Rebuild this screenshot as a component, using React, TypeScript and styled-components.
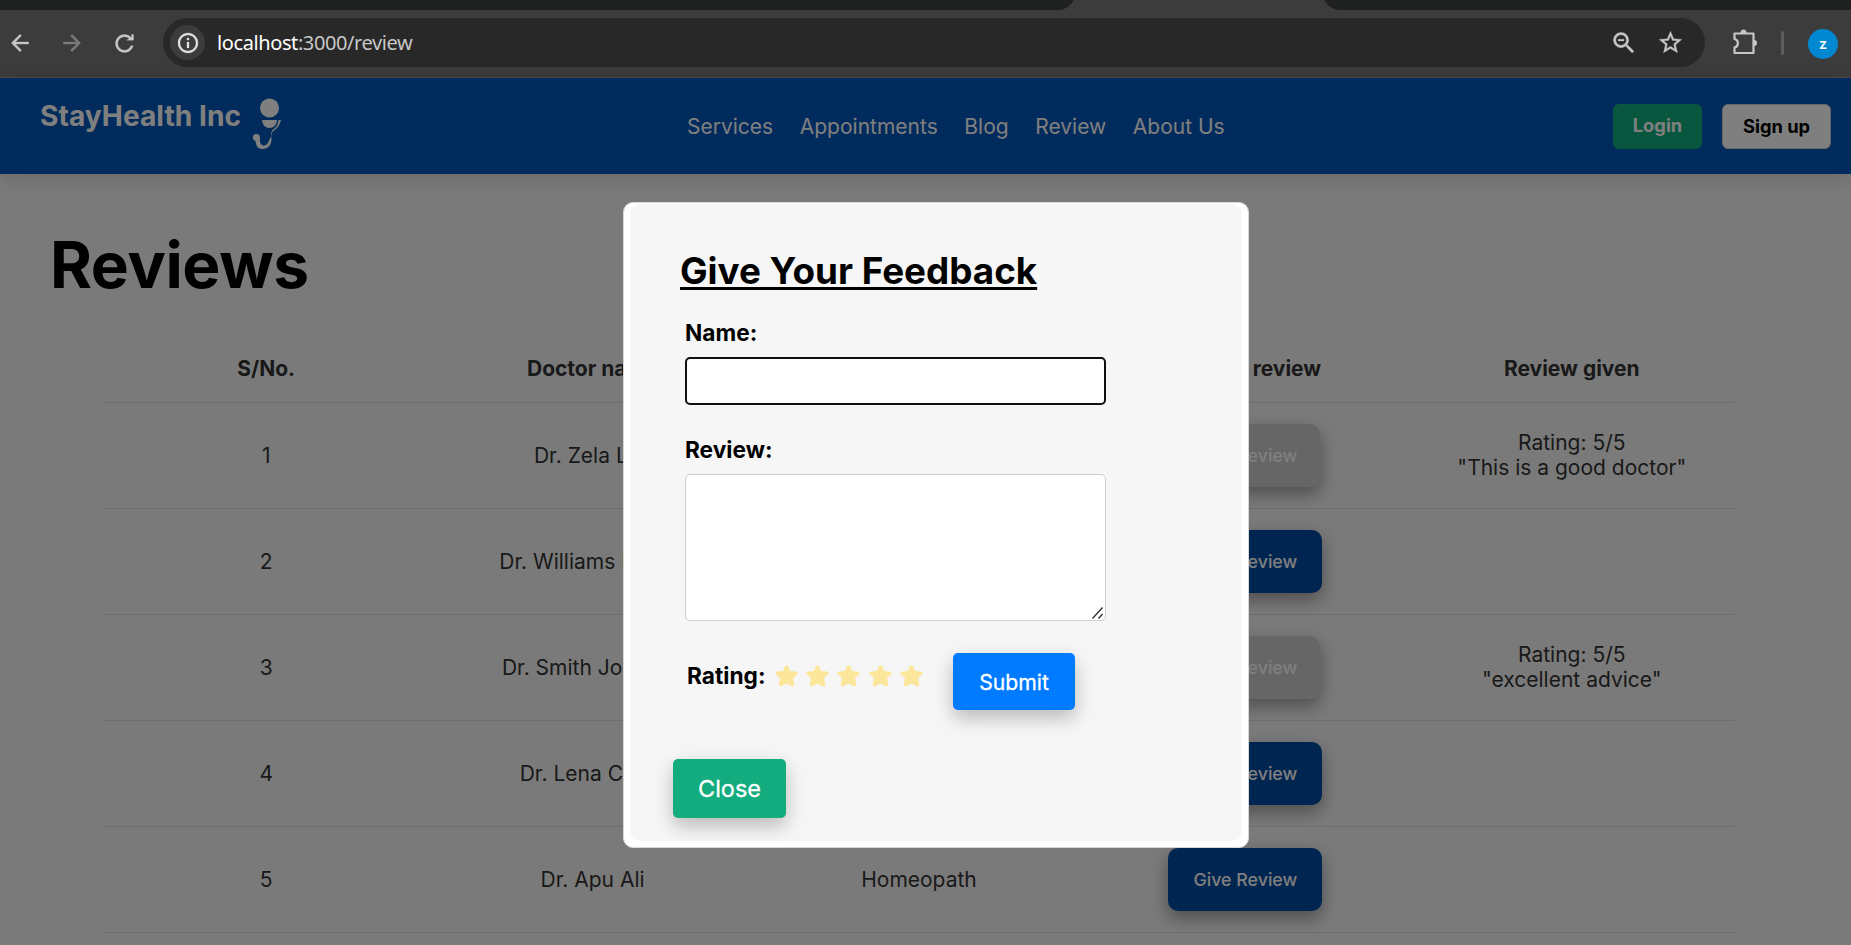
import React from "react";
import styled, { createGlobalStyle } from "styled-components";

const Global = createGlobalStyle`
  * { box-sizing: border-box; }
  body { margin: 0; font-family: Inter, "Liberation Sans", sans-serif; background: #f5f5f5; overflow: hidden; }
  button, input, textarea { font-family: inherit; }
`;

const Window = styled.div`
  width: 1851px;
  height: 945px;
  overflow: hidden;
  display: flex;
  flex-direction: column;
`;

const TabStrip = styled.div`
  height: 10px;
  flex: none;
  background: #3c3c3c;
  display: flex;
  justify-content: space-between;
`;

const TabGap = styled.div<{ $width: number; $side: "left" | "right" }>`
  width: ${(p) => p.$width}px;
  height: 20px;
  margin-top: -10px;
  background: #1f2120;
  border-radius: ${(p) => (p.$side === "left" ? "0 0 17px 0" : "0 0 0 17px")};
`;

const Toolbar = styled.div`
  height: 68px;
  flex: none;
  background: #3c3c3c;
  border-bottom: 1px solid #4c4c4c;
  display: flex;
  align-items: center;
  padding: 0 13px 2px 7px;
  color: #c7c7c7;
`;

const NavIcons = styled.div`
  display: flex;
  gap: 26px;
  width: 156px;
  padding-top: 1px;
  svg { display: block; }
`;

const Address = styled.div`
  width: 1542px;
  height: 49px;
  border-radius: 25px;
  background: #282828;
  display: flex;
  align-items: center;
  padding: 0 21px 0 7px;
`;

const InfoBadge = styled.div`
  width: 35px;
  height: 35px;
  border-radius: 50%;
  background: #3c3c3c;
  display: grid;
  place-items: center;
  color: #e3e3e3;
`;

const Url = styled.div`
  flex: 1;
  margin-left: 12px;
  font: 20px "Noto Sans", sans-serif;
  letter-spacing: -0.4px;
  color: #c7c7c7;
  b { font-weight: 400; color: #fff; }
`;

const AddressIcons = styled.div`
  display: flex;
  gap: 19px;
`;

const Extensions = styled.div`
  margin-left: 24px;
  margin-top: -3px;
  display: flex;
`;

const Divider = styled.div`
  width: 3px;
  height: 24px;
  margin-left: 22px;
  border-radius: 2px;
  background: #5e5e5e;
`;

const Avatar = styled.div`
  width: 30px;
  height: 30px;
  margin: 2px 0 0 auto;
  border-radius: 50%;
  background: #0288d1;
  color: #fff;
  font: 500 15px Roboto, sans-serif;
  display: grid;
  place-items: center;
`;

const Page = styled.div`
  position: relative;
  flex: 1;
  min-height: 0;
  background: #f5f5f5;
`;

const Header = styled.header`
  height: 96px;
  background: #0056b8;
  box-shadow: 0 4px 20px rgba(0, 0, 0, 0.15);
  display: flex;
  align-items: center;
  justify-content: space-between;
  padding: 0 20px 0 40px;
`;

const Brand = styled.div`
  width: 507px;
  height: 96px;
  display: flex;
  color: #fff;
  font-size: 28.2px;
  line-height: 36px;
  font-weight: 700;
  padding-top: 20px;
  span { width: 201px; white-space: nowrap; }
  svg { margin-left: 11px; }
`;

const Links = styled.nav`
  display: flex;
  gap: 26.6px;
  margin-right: auto;
  margin-left: 140px;
  a { color: #fff; font-size: 21px; line-height: 26px; padding-top: 2px; }
`;

const Auth = styled.div`
  display: flex;
  gap: 20px;
`;

const AuthButton = styled.button<{ $primary?: boolean }>`
  width: ${(p) => (p.$primary ? 89 : 109)}px;
  height: 45px;
  padding: ${(p) => (p.$primary ? "0 0 2px" : "0")};
  border: ${(p) => (p.$primary ? "0" : "1px solid #ccc")};
  border-radius: 6px;
  background: ${(p) => (p.$primary ? "#12ac7e" : "#fff")};
  color: ${(p) => (p.$primary ? "#fff" : "#000")};
  font-size: 18.3px;
  font-weight: 700;
`;

const Title = styled.h1`
  margin: 47px 0 0 50px;
  font-size: 64px;
  line-height: 88px;
  font-weight: 700;
  letter-spacing: -0.4px;
  color: #000;
`;

const Table = styled.table`
  margin: 25px 0 0 103px;
  width: 1632px;
  border-collapse: collapse;
  table-layout: fixed;
  color: #333;
  font-size: 21px;
  line-height: 25px;
  text-align: center;
`;

const HeadCell = styled.th`
  height: 68px;
  padding: 2px 0 0;
  font-weight: 700;
  border-bottom: 1px solid #ddd;
`;

const Cell = styled.td`
  height: 106.2px;
  padding: 0;
  font-weight: 400;
  border-bottom: 1px solid #ddd;
`;

const ReviewButton = styled.button`
  height: 63px;
  padding: 0 25px;
  border: 0;
  border-radius: 10px;
  background: #004aa0;
  color: #fff;
  font-size: 17.8px;
  font-weight: 500;
  vertical-align: middle;
  box-shadow: 0 8px 16px rgba(0, 0, 0, 0.2), 0 6px 20px rgba(0, 0, 0, 0.19);
  &:disabled { background: #ccc; color: #fff; padding: 0 23px; }
`;

const Overlay = styled.div`
  position: absolute;
  inset: 0;
  background: rgba(0, 0, 0, 0.5);
`;

const Modal = styled.div`
  position: absolute;
  left: 623px;
  top: 124px;
  width: 626px;
  height: 646px;
  padding: 1px 6px 6px;
  border: 1px solid #d7d7d7;
  border-radius: 10px;
  background: #fff;
`;

const Panel = styled.div`
  height: 100%;
  border-radius: 10px;
  background: #f6f6f6;
  padding: 44px 0 0 50px;
`;

const PanelTitle = styled.h2`
  margin: 0;
  font-size: 36.8px;
  line-height: 46px;
  font-weight: 700;
  text-decoration: underline;
  text-decoration-thickness: 3px;
  text-underline-offset: 3px;
  text-decoration-skip-ink: none;
`;

const Form = styled.form`
  padding-left: 5px;
`;

const Label = styled.label<{ $top: number }>`
  display: block;
  margin-top: ${(p) => p.$top}px;
  font-size: 22.7px;
  line-height: 28px;
  font-weight: 700;
`;

const NameInput = styled.input`
  display: block;
  width: 421px;
  height: 48px;
  margin-top: 10px;
  border: 2px solid #101010;
  border-radius: 5px;
  background: #fff;
  outline: none;
`;

const ReviewBox = styled.div`
  position: relative;
  width: 421px;
  height: 147px;
  margin-top: 10px;
  svg { position: absolute; right: 2px; bottom: 2px; }
`;

const ReviewInput = styled.textarea`
  display: block;
  width: 100%;
  height: 100%;
  resize: none;
  border: 1px solid #ccc;
  border-radius: 5px;
  background: #fff;
`;

const RatingRow = styled.div`
  display: flex;
  align-items: flex-start;
  margin-top: 32px;
  padding-left: 2px;
`;

const RatingLabel = styled.span`
  width: 86px;
  margin-top: 9px;
  font-size: 22.7px;
  line-height: 28px;
  font-weight: 700;
`;

const Stars = styled.div`
  display: flex;
  gap: 4.2px;
  margin-top: 10px;
  width: 180px;
`;

const ActionButton = styled.button<{ $close?: boolean }>`
  width: ${(p) => (p.$close ? 113 : 122)}px;
  height: ${(p) => (p.$close ? 59 : 57)}px;
  margin: ${(p) => (p.$close ? "49px 0 0 -7px" : "0")};
  display: block;
  padding: 0;
  border: 0;
  border-radius: 5px;
  background: ${(p) => (p.$close ? "#12ac7e" : "#007bff")};
  color: #fff;
  font-size: ${(p) => (p.$close ? 23.4 : 21.2)}px;
  font-weight: 400;
  -webkit-text-stroke: 0.3px #fff;
  box-shadow: 0 8px 16px rgba(0, 0, 0, 0.13), 0 8px 24px rgba(0, 0, 0, 0.13);
`;

const doctors = [
  { name: "Dr. Zela Lim", field: "Dentist", review: "This is a good doctor" },
  { name: "Dr. Williams Bryant", field: "Dermatology" },
  { name: "Dr. Smith Johnson", field: "Cardiology", review: "excellent advice" },
  { name: "Dr. Lena Costa", field: "Neurology" },
  { name: "Dr. Apu Ali", field: "Homeopath" },
];

const Glyph = ({ d, size = 26, color = "currentColor" }: { d: string; size?: number; color?: string }) => (
  <svg width={size} height={size} viewBox="0 0 24 24" fill={color} stroke={color} strokeWidth={0.3}>
    <path d={d} />
  </svg>
);

const BACK = "M20 11H7.83l5.59-5.59L12 4l-8 8 8 8 1.41-1.41L7.83 13H20v-2z";
const FORWARD = "M4 11h12.17l-5.59-5.59L12 4l8 8-8 8-1.41-1.41L16.17 13H4v-2z";
const RELOAD = "M17.65 6.35C16.2 4.9 14.21 4 12 4c-4.42 0-7.99 3.58-7.99 8s3.57 8 7.99 8c3.73 0 6.84-2.55 7.73-6h-2.08c-.82 2.33-3.04 4-5.65 4-3.31 0-6-2.69-6-6s2.69-6 6-6c1.66 0 3.14.69 4.22 1.78L14 9h6V4h-1.8v2.9z";
const INFO = "M11 7h2v2h-2zm0 4h2v6h-2zm1-9C6.48 2 2 6.48 2 12s4.48 10 10 10 10-4.48 10-10S17.52 2 12 2zm0 18c-4.41 0-8-3.59-8-8s3.59-8 8-8 8 3.59 8 8-3.59 8-8 8z";
const ZOOM_OUT = "M15.5 14h-.79l-.28-.27C15.41 12.59 16 11.11 16 9.5 16 5.91 13.09 3 9.5 3S3 5.91 3 9.5 5.91 16 9.5 16c1.61 0 3.09-.59 4.23-1.57l.27.28v.79l5 4.99L20.49 19l-4.99-5zm-6 0C7.01 14 5 11.99 5 9.5S7.01 5 9.5 5 14 7.01 14 9.5 11.99 14 9.5 14zM7 8.7h5v1.5H7z";
const BOOKMARK = "M22 9.24l-7.19-.62L12 2 9.19 8.63 2 9.24l5.46 4.73L5.82 21 12 17.27 18.18 21l-1.63-7.03L22 9.24zM12 15.4l-3.76 2.27 1-4.28-3.32-2.88 4.38-.38L12 6.1l1.71 4.04 4.38.38-3.32 2.88 1 4.28L12 15.4z";
const STAR = "M10.7 3c.5-1.05 2.1-1.05 2.6 0l1.9 4.3 5.3.5c1.3.15 1.7 1.5.8 2.3l-3.6 3.3 1 5.5c.2 1.3-.9 2.1-2 1.5L12 18.200l-4.7 2.2c-1.1.6-2.2-.2-2-1.5l1-5.5-3.6-3.3c-.9-.8-.5-2.15.8-2.3l5.300-.5z";

export default function App() {
  return (
    <Window>
      <Global />
      <TabStrip>
        <TabGap $width={1075} $side="left" />
        <TabGap $width={528} $side="right" />
      </TabStrip>
      <Toolbar>
        <NavIcons>
          <Glyph d={BACK} />
          <Glyph d={FORWARD} color="#7b7b7b" />
          <Glyph d={RELOAD} size={27} />
        </NavIcons>
        <Address>
          <InfoBadge><Glyph d={INFO} size={24} /></InfoBadge>
          <Url><b>localhost</b>:3000/review</Url>
          <AddressIcons>
            <Glyph d={ZOOM_OUT} size={28} />
            <Glyph d={BOOKMARK} size={27} />
          </AddressIcons>
        </Address>
        <Extensions>
          <svg width="30" height="30" viewBox="0 0 30 30" fill="none" stroke="currentColor" strokeWidth="2.2" strokeLinejoin="round">
            <path d="M5.500 7.500h19v19.500H5.500v-5.500c4.500-1 4.500-7.500 0-8.500z" />
            <path d="M11.500 7a3 3.500 0 0 1 6 0zM25 14a3 3 0 0 1 0 6z" fill="currentColor" stroke="none" />
          </svg>
        </Extensions>
        <Divider />
        <Avatar>z</Avatar>
      </Toolbar>
      <Page>
        <Header>
          <Brand>
            <span>StayHealth Inc</span>
            <svg width="30" height="52" viewBox="0 0 30 52" fill="#fff">
              <circle cx="17.500" cy="10" r="9.500" />
              <path d="M10 22h15c-.3 5-3.500 8-7.500 8s-7-3-7.500-8z" />
              <path d="M29 22c-1 5-4 8.500-8 11.500l-1-1c4-3 6-5.500 6.500-10.500h1z" />
              <path d="M21 32c-2 1.500-2 4-1.500 9 0 6-3.500 10-9 10-5 0-6.500-3.500-7-8a3.600 3.600 0 1 1 4.500-3.500c-.5 4 .5 8 4 8 4 0 5-5.500 7.500-10z" />
            </svg>
          </Brand>
          <Links>
            <a>Services</a><a>Appointments</a><a>Blog</a><a>Review</a><a>About Us</a>
          </Links>
          <Auth>
            <AuthButton $primary>Login</AuthButton>
            <AuthButton>Sign up</AuthButton>
          </Auth>
        </Header>
        <Title>Reviews</Title>
        <Table>
          <thead>
            <tr>
              <HeadCell>S/No.</HeadCell>
              <HeadCell>Doctor name</HeadCell>
              <HeadCell>Doctor speciality</HeadCell>
              <HeadCell>Provide review</HeadCell>
              <HeadCell>Review given</HeadCell>
            </tr>
          </thead>
          <tbody>
            {doctors.map((d, i) => (
              <tr key={d.name}>
                <Cell>{i + 1}</Cell>
                <Cell>{d.name}</Cell>
                <Cell>{d.field}</Cell>
                <Cell><ReviewButton disabled={!!d.review}>Give Review</ReviewButton></Cell>
                <Cell>{d.review && <>Rating: 5/5<br />"{d.review}"</>}</Cell>
              </tr>
            ))}
          </tbody>
        </Table>
        <Overlay />
        <Modal>
          <Panel>
            <PanelTitle>Give Your Feedback</PanelTitle>
            <Form>
              <Label $top={25}>Name:</Label>
              <NameInput />
              <Label $top={31}>Review:</Label>
              <ReviewBox>
                <ReviewInput />
                <svg width="12" height="12" viewBox="0 0 12 12" stroke="#333" strokeWidth="1.4">
                  <path d="M0.500 11.500L10.500 0.500M6.500 11.500L10.500 7" />
                </svg>
              </ReviewBox>
              <RatingRow>
                <RatingLabel>Rating:</RatingLabel>
                <Stars>
                  {[1, 2, 3, 4, 5].map((n) => <Glyph key={n} d={STAR} size={27} color="#fbe69a" />)}
                </Stars>
                <ActionButton type="button">Submit</ActionButton>
              </RatingRow>
            </Form>
            <ActionButton $close>Close</ActionButton>
          </Panel>
        </Modal>
      </Page>
    </Window>
  );
}
